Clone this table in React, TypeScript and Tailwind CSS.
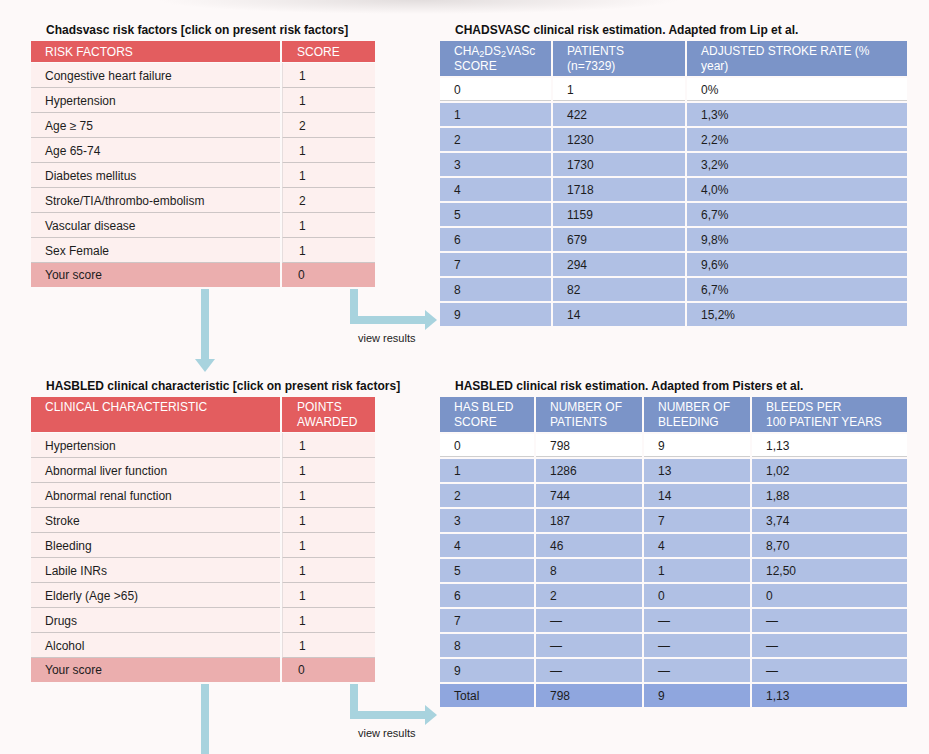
import React from "react";

const CHADS_FACTORS = [
  ["Congestive heart failure", "1"],
  ["Hypertension", "1"],
  ["Age ≥ 75", "2"],
  ["Age 65-74", "1"],
  ["Diabetes mellitus", "1"],
  ["Stroke/TIA/thrombo-embolism", "2"],
  ["Vascular disease", "1"],
  ["Sex Female", "1"],
];

const CHADS_RATES = [
  ["0", "1", "0%"],
  ["1", "422", "1,3%"],
  ["2", "1230", "2,2%"],
  ["3", "1730", "3,2%"],
  ["4", "1718", "4,0%"],
  ["5", "1159", "6,7%"],
  ["6", "679", "9,8%"],
  ["7", "294", "9,6%"],
  ["8", "82", "6,7%"],
  ["9", "14", "15,2%"],
];

const HASBLED_FACTORS = [
  ["Hypertension", "1"],
  ["Abnormal liver function", "1"],
  ["Abnormal renal function", "1"],
  ["Stroke", "1"],
  ["Bleeding", "1"],
  ["Labile INRs", "1"],
  ["Elderly (Age >65)", "1"],
  ["Drugs", "1"],
  ["Alcohol", "1"],
];

const HASBLED_RATES = [
  ["0", "798", "9", "1,13"],
  ["1", "1286", "13", "1,02"],
  ["2", "744", "14", "1,88"],
  ["3", "187", "7", "3,74"],
  ["4", "46", "4", "8,70"],
  ["5", "8", "1", "12,50"],
  ["6", "2", "0", "0"],
  ["7", "—", "—", "—"],
  ["8", "—", "—", "—"],
  ["9", "—", "—", "—"],
  ["Total", "798", "9", "1,13"],
];

function Title({ children }: { children: React.ReactNode }) {
  return (
    <p className="pl-[15px] mb-[3px] whitespace-nowrap text-[12px] leading-[16px] font-bold text-[#111]">{children}</p>
  );
}

function FactorTable({ head, rows, tall }: { head: React.ReactNode[]; rows: string[][]; tall?: boolean }) {
  const headCell = tall
    ? "h-[35px] bg-[#e35d5f] pt-[3px] leading-[15px]"
    : "h-[21px] bg-[#e35d5f] flex items-center";
  return (
    <div className="w-[344px] text-[12px]">
      <div className="flex gap-[2px] text-white">
        <div className={`w-[249px] pl-[14px] ${headCell}`}>{head[0]}</div>
        <div className={`w-[93px] pl-[15px] ${headCell}`}>{head[1]}</div>
      </div>
      <div className="mt-[1px]">
        {rows.map(([name, pts]) => (
          <div key={name} className="flex gap-[2px] h-[25px]">
            <div className="w-[249px] pl-[14px] pt-[1px] flex items-center bg-[#fdf0ef] border-b border-[#cdc6c6]">{name}</div>
            <div className="w-[93px] pl-[16px] pt-[1px] flex items-center bg-[#fdf0ef] border-b border-[#cdc6c6] border-l border-l-[#e6dede]">
              {pts}
            </div>
          </div>
        ))}
        <div className="flex gap-[2px] h-[24px]">
          <div className="w-[249px] pl-[14px] flex items-center bg-[#ebaeae]">Your score</div>
          <div className="w-[93px] pl-[16px] flex items-center bg-[#ebaeae]">0</div>
        </div>
      </div>
    </div>
  );
}

function RateTable({
  head,
  rows,
  widths,
  totalRow,
}: {
  head: React.ReactNode[];
  rows: string[][];
  widths: string[];
  totalRow?: boolean;
}) {
  return (
    <div className="w-[467px] flex flex-col gap-[2px] text-[12px]">
      <div className="flex gap-[2px] text-white">
        {head.map((h, i) => (
          <div key={i} className={`${widths[i]} h-[35px] bg-[#7b94c8] pl-[14px] pt-[3px] leading-[15px] whitespace-nowrap`}>
            {h}
          </div>
        ))}
      </div>
      {rows.map((r, ri) => {
        const first = ri === 0;
        const total = totalRow && ri === rows.length - 1;
        const bg = first ? "bg-white border-b border-[#cfcfcf]" : total ? "bg-[#8fa6de]" : "bg-[#b0c0e4]";
        return (
          <div key={ri} className="flex gap-[2px] h-[23px]">
            {r.map((c, ci) => (
              <div key={ci} className={`${widths[ci]} ${bg} pl-[14px] pt-[1px] flex items-center`}>
                {c}
              </div>
            ))}
          </div>
        );
      })}
    </div>
  );
}

function Arrows({ height, textTop }: { height: number; textTop: string }) {
  return (
    <div className="relative" style={{ height }}>
      <svg className="absolute left-0 top-0 overflow-visible" width="410" height={height}>
        <rect x="170" y="2" width="8" height={height > 86 ? 72 : height - 2} fill="#a8d3de" />
        {height > 86 && <polygon points="164,72 184,72 174,85" fill="#a8d3de" />}
        <rect x="319" y="2" width="8" height="35" fill="#a8d3de" />
        <rect x="319" y="29" width="76" height="8" fill="#a8d3de" />
        <polygon points="394,23 394,43 406,33" fill="#a8d3de" />
      </svg>
      <p className={`pl-[327px] ${textTop} whitespace-nowrap text-[11px] leading-[13px] text-[#222]`}>view results</p>
    </div>
  );
}

const TOP_W = ["w-[111px]", "w-[132px]", "w-[220px]"];
const BOT_W = ["w-[94px]", "w-[106px]", "w-[106px]", "w-[155px]"];

export default function App() {
  return (
    <div className="w-[929px] h-[754px] overflow-hidden bg-[#fdf9f9] bg-[radial-gradient(ellipse_260px_14px_at_45%_0%,#e2dddd,transparent)] font-['Liberation_Sans',Arial,sans-serif] text-[#1c1c1c] pl-[31px] pt-[22px]">
      <div className="flex gap-[65px]">
        <div className="w-[344px] shrink-0">
          <Title>Chadsvasc risk factors [click on present risk factors]</Title>
          <FactorTable head={["RISK FACTORS", "SCORE"]} rows={CHADS_FACTORS} />
          <Arrows height={91} textTop="pt-[45px]" />
        </div>
        <div className="w-[467px] shrink-0">
          <Title>CHADSVASC clinical risk estimation. Adapted from Lip et al.</Title>
          <RateTable
            widths={TOP_W}
            head={[
              <>
                CHA<sub>2</sub>DS<sub>2</sub>VASc
                <br />
                SCORE
              </>,
              <>
                PATIENTS
                <br />
                (n=7329)
              </>,
              <>
                ADJUSTED STROKE RATE (%
                <br />
                year)
              </>,
            ]}
            rows={CHADS_RATES}
          />
        </div>
      </div>
      <div className="flex gap-[65px]">
        <div className="w-[344px] shrink-0">
          <Title>HASBLED clinical characteristic [click on present risk factors]</Title>
          <FactorTable
            tall
            head={[
              "CLINICAL CHARACTERISTIC",
              <>
                POINTS
                <br />
                AWARDED
              </>,
            ]}
            rows={HASBLED_FACTORS}
          />
          <Arrows height={72} textTop="pt-[45px]" />
        </div>
        <div className="w-[467px] shrink-0">
          <Title>HASBLED clinical risk estimation. Adapted from Pisters et al.</Title>
          <RateTable
            widths={BOT_W}
            totalRow
            head={[
              <>
                HAS BLED
                <br />
                SCORE
              </>,
              <>
                NUMBER OF
                <br />
                PATIENTS
              </>,
              <>
                NUMBER OF
                <br />
                BLEEDING
              </>,
              <>
                BLEEDS PER
                <br />
                100 PATIENT YEARS
              </>,
            ]}
            rows={HASBLED_RATES}
          />
        </div>
      </div>
    </div>
  );
}
